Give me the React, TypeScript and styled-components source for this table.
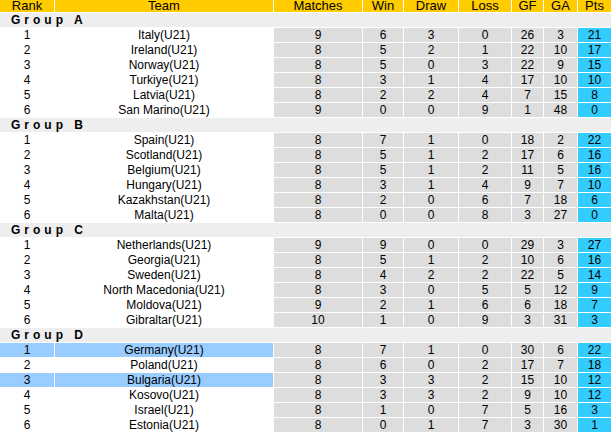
import { Fragment } from 'react';
import styled, { createGlobalStyle } from 'styled-components';

type TeamRow = {
  team: string;
  m: number;
  w: number;
  d: number;
  l: number;
  gf: number;
  ga: number;
  pts: number;
  hl?: boolean;
};

type Group = {
  name: string;
  rows: TeamRow[];
};

const groups: Group[] = [
  {
    name: 'Group A',
    rows: [
      { team: 'Italy(U21)', m: 9, w: 6, d: 3, l: 0, gf: 26, ga: 3, pts: 21 },
      { team: 'Ireland(U21)', m: 8, w: 5, d: 2, l: 1, gf: 22, ga: 10, pts: 17 },
      { team: 'Norway(U21)', m: 8, w: 5, d: 0, l: 3, gf: 22, ga: 9, pts: 15 },
      { team: 'Turkiye(U21)', m: 8, w: 3, d: 1, l: 4, gf: 17, ga: 10, pts: 10 },
      { team: 'Latvia(U21)', m: 8, w: 2, d: 2, l: 4, gf: 7, ga: 15, pts: 8 },
      { team: 'San Marino(U21)', m: 9, w: 0, d: 0, l: 9, gf: 1, ga: 48, pts: 0 },
    ],
  },
  {
    name: 'Group B',
    rows: [
      { team: 'Spain(U21)', m: 8, w: 7, d: 1, l: 0, gf: 18, ga: 2, pts: 22 },
      { team: 'Scotland(U21)', m: 8, w: 5, d: 1, l: 2, gf: 17, ga: 6, pts: 16 },
      { team: 'Belgium(U21)', m: 8, w: 5, d: 1, l: 2, gf: 11, ga: 5, pts: 16 },
      { team: 'Hungary(U21)', m: 8, w: 3, d: 1, l: 4, gf: 9, ga: 7, pts: 10 },
      { team: 'Kazakhstan(U21)', m: 8, w: 2, d: 0, l: 6, gf: 7, ga: 18, pts: 6 },
      { team: 'Malta(U21)', m: 8, w: 0, d: 0, l: 8, gf: 3, ga: 27, pts: 0 },
    ],
  },
  {
    name: 'Group C',
    rows: [
      { team: 'Netherlands(U21)', m: 9, w: 9, d: 0, l: 0, gf: 29, ga: 3, pts: 27 },
      { team: 'Georgia(U21)', m: 8, w: 5, d: 1, l: 2, gf: 10, ga: 6, pts: 16 },
      { team: 'Sweden(U21)', m: 8, w: 4, d: 2, l: 2, gf: 22, ga: 5, pts: 14 },
      { team: 'North Macedonia(U21)', m: 8, w: 3, d: 0, l: 5, gf: 5, ga: 12, pts: 9 },
      { team: 'Moldova(U21)', m: 9, w: 2, d: 1, l: 6, gf: 6, ga: 18, pts: 7 },
      { team: 'Gibraltar(U21)', m: 10, w: 1, d: 0, l: 9, gf: 3, ga: 31, pts: 3 },
    ],
  },
  {
    name: 'Group D',
    rows: [
      { team: 'Germany(U21)', m: 8, w: 7, d: 1, l: 0, gf: 30, ga: 6, pts: 22, hl: true },
      { team: 'Poland(U21)', m: 8, w: 6, d: 0, l: 2, gf: 17, ga: 7, pts: 18 },
      { team: 'Bulgaria(U21)', m: 8, w: 3, d: 3, l: 2, gf: 15, ga: 10, pts: 12, hl: true },
      { team: 'Kosovo(U21)', m: 8, w: 3, d: 3, l: 2, gf: 9, ga: 10, pts: 12 },
      { team: 'Israel(U21)', m: 8, w: 1, d: 0, l: 7, gf: 5, ga: 16, pts: 3 },
      { team: 'Estonia(U21)', m: 8, w: 0, d: 1, l: 7, gf: 3, ga: 30, pts: 1 },
    ],
  },
];

const GlobalStyle = createGlobalStyle`
  html, body {
    margin: 0;
    padding: 0;
    background: #fff;
  }
  body {
    font-family: "Liberation Sans", Arial, sans-serif;
    font-size: 12px;
    color: #000;
  }
`;

const Table = styled.div`
  width: 611px;
  display: flex;
  flex-direction: column;
  gap: 1px;
  background: #fff;
`;

const Row = styled.div`
  display: grid;
  grid-template-columns: 54px 218px 88px 40px 54px 52px 31px 33px 33px;
  column-gap: 1px;
  height: 14px;
`;

const HeadRow = styled(Row)`
  height: 12px;
`;

const HeadCell = styled.div`
  background: #ffcc00;
  text-align: center;
  line-height: 12px;
  font-size: 13px;
  color: #000;
  white-space: nowrap;
`;

const GroupRow = styled.div`
  height: 14px;
  background: #eeeeee;
  padding-left: 11px;
  line-height: 14px;
  font-weight: bold;
  letter-spacing: 4px;
  color: #000;
`;

const Cell = styled.div<{ $kind: 'name' | 'stat' | 'pts'; $hl?: boolean }>`
  text-align: center;
  line-height: 14px;
  white-space: nowrap;
  background: ${(p) =>
    p.$kind === 'pts' ? '#33ccff' : p.$kind === 'stat' ? '#dddddd' : p.$hl ? '#99ccff' : '#ffffff'};
`;

const headers = ['Rank', 'Team', 'Matches', 'Win', 'Draw', 'Loss', 'GF', 'GA', 'Pts'];

export default function App() {
  return (
    <>
      <GlobalStyle />
      <Table>
        <HeadRow>
          {headers.map((h) => (
            <HeadCell key={h}>{h}</HeadCell>
          ))}
        </HeadRow>
        {groups.map((g) => (
          <Fragment key={g.name}>
            <GroupRow>{g.name}</GroupRow>
            {g.rows.map((r, i) => (
              <Row key={r.team}>
                <Cell $kind="name" $hl={r.hl}>{i + 1}</Cell>
                <Cell $kind="name" $hl={r.hl}>{r.team}</Cell>
                <Cell $kind="stat">{r.m}</Cell>
                <Cell $kind="stat">{r.w}</Cell>
                <Cell $kind="stat">{r.d}</Cell>
                <Cell $kind="stat">{r.l}</Cell>
                <Cell $kind="stat">{r.gf}</Cell>
                <Cell $kind="stat">{r.ga}</Cell>
                <Cell $kind="pts">{r.pts}</Cell>
              </Row>
            ))}
          </Fragment>
        ))}
      </Table>
    </>
  );
}
